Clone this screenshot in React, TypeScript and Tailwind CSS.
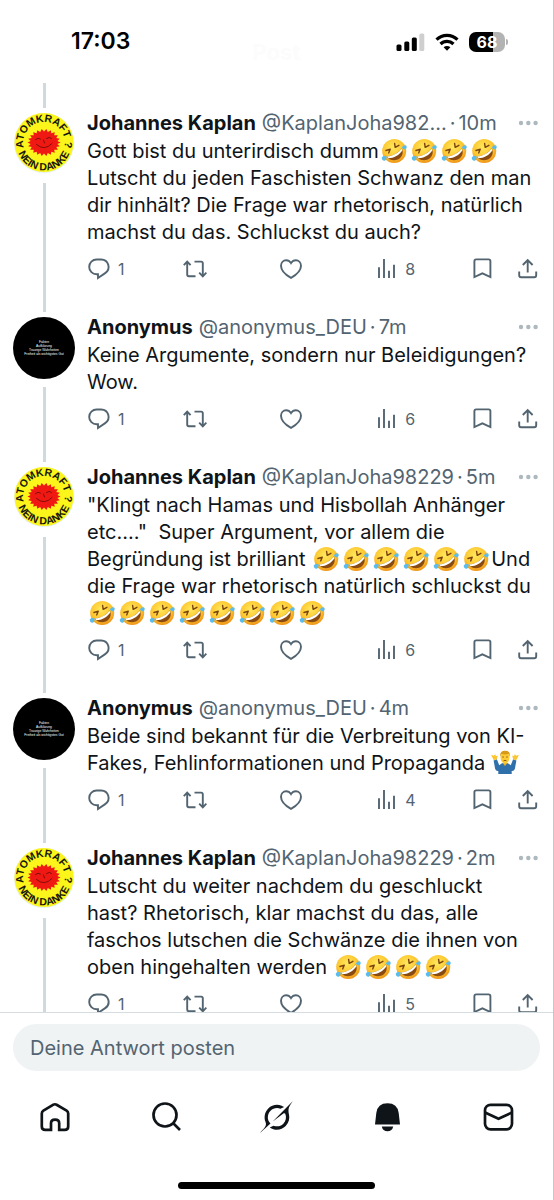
import { Fragment } from 'react';
import type { ReactNode } from 'react';

type Author = 'kaplan' | 'anonymus';

type Post = {
  author: Author;
  handle: string;
  time: string;
  text: string;
  views: number;
};

const names: Record<Author, string> = {
  kaplan: 'Johannes Kaplan',
  anonymus: 'Anonymus',
};

const posts: Post[] = [
  {
    author: 'kaplan',
    handle: '@KaplanJoha982...',
    time: '10m',
    text: 'Gott bist du unterirdisch dumm🤣🤣🤣🤣\nLutscht du jeden Faschisten Schwanz den man\ndir hinhält? Die Frage war rhetorisch, natürlich\nmachst du das. Schluckst du auch?',
    views: 8,
  },
  {
    author: 'anonymus',
    handle: '@anonymus_DEU',
    time: '7m',
    text: 'Keine Argumente, sondern nur Beleidigungen?\nWow.',
    views: 6,
  },
  {
    author: 'kaplan',
    handle: '@KaplanJoha98229',
    time: '5m',
    text: '"Klingt nach Hamas und Hisbollah Anhänger\netc...."  Super Argument, vor allem die\nBegründung ist brilliant 🤣🤣🤣🤣🤣🤣Und\ndie Frage war rhetorisch natürlich schluckst du\n🤣🤣🤣🤣🤣🤣🤣🤣',
    views: 6,
  },
  {
    author: 'anonymus',
    handle: '@anonymus_DEU',
    time: '4m',
    text: 'Beide sind bekannt für die Verbreitung von KI-\nFakes, Fehlinformationen und Propaganda 🤷',
    views: 4,
  },
  {
    author: 'kaplan',
    handle: '@KaplanJoha98229',
    time: '2m',
    text: 'Lutscht du weiter nachdem du geschluckt\nhast? Rhetorisch, klar machst du das, alle\nfaschos lutschen die Schwänze die ihnen von\noben hingehalten werden 🤣🤣🤣🤣',
    views: 5,
  },
];

function Laughing() {
  return (
    <svg viewBox="0 0 26 26" role="img" aria-label="🤣" className="mx-0.5 inline-block size-[26px] align-[-6px]">
      <defs>
        <radialGradient id="face" cx="0.45" cy="0.35" r="0.65">
          <stop offset="0" stopColor="#ffe85c" />
          <stop offset="0.65" stopColor="#fdc62f" />
          <stop offset="1" stopColor="#ee9418" />
        </radialGradient>
      </defs>
      <circle cx="13.2" cy="13" r="12" fill="url(#face)" />
      <path d="M5.800 18.200C11 18.600 17.600 15 20.600 10.200c2.600 4.200.5 9.500-3.800 11.300-4.400 1.800-9.400.2-11-3.300z" fill="#8a4b12" />
      <path d="M6 18.300C11.400 18.400 17.400 15.100 20.500 10.500l.8 2c-2.900 4.500-8.600 7.700-13.800 7.700z" fill="#fff" />
      <path d="M5 12.500l4.300-1.400-1.600 3.800M13.600 5.400l.6 4 3.700-2.100" fill="none" stroke="#7a4310" strokeWidth="1.400" strokeLinecap="round" strokeLinejoin="round" />
      <path d="M.9 19.200c1-1.200 2.900-1.500 4.600-.9.300 1.900-.3 3.900-1.700 4.400C2 23.100.2 21.100.9 19.200zM20.900 9.500c.9-1.600 2.800-2.600 4.200-1.900 1.100.9.700 2.900-.7 3.600-1.300.5-2.900-.3-3.500-1.700z" fill="#5bbcec" />
    </svg>
  );
}

function Shrugging() {
  return (
    <svg viewBox="0 0 28 26" role="img" aria-label="🤷" className="inline-block h-[26px] w-7 align-[-6px]">
      <path d="M2.600 10.400l3.300-1.200 2.300 6q2.600-2.400 5.800-2.400t5.800 2.400l2.300-6 3.300 1.200-1.500 8.300q-.8 2.600-3.200 2.300V24H7.300v-3q-2.400.3-3.200-2.300z" fill="#2f70ab" />
      <path d="M11.500 12.800h5L14 16z" fill="#f2b51e" />
      <path d="M5.800 9.200l-3 1.100L.6 6l-.2-1.300 2.200 1L4.400 4.200l.4 2 2-.8zM22.200 9.200l3 1.100L27.400 6l.2-1.300-2.200 1-1.800-1.500-.4 2-2-.8z" fill="#fcc42d" />
      <ellipse cx="14" cy="7.600" rx="4.500" ry="5.800" fill="#fdcb35" />
      <path d="M9.200 6.800Q8.400 1 14 .8t4.800 6L17.600 4q-3.600.9-7.200 0z" fill="#d99a16" />
      <path d="M11.300 7h1.500M15.200 7h1.500M12.500 10.800q1.500-1 3 0" stroke="#6b3f0d" strokeWidth=".8" fill="none" />
    </svg>
  );
}

function PostText({ text }: { text: string }) {
  return (
    <p className="text-[20px] leading-[27px] whitespace-pre-wrap text-[#0f1419]">
      {text.split(/(🤣|🤷)/u).map((part, i) => (
        <Fragment key={i}>{part === '🤣' ? <Laughing /> : part === '🤷' ? <Shrugging /> : part}</Fragment>
      ))}
    </p>
  );
}

// Zigzag outline of the laughing sun
const flames = Array.from({ length: 44 }, (_, i) => {
  const angle = (i * Math.PI) / 22;
  const radius = i % 2 === 0 ? 16.5 : 13.5;
  return `${31 + radius * Math.cos(angle)},${31 + radius * 0.82 * Math.sin(angle)}`;
}).join(' ');

function Avatar({ author }: { author: Author }) {
  if (author === 'anonymus') {
    return (
      <svg viewBox="0 0 62 62" className="size-[62px] shrink-0" fontFamily="Liberation Sans, sans-serif">
        <circle cx="31" cy="31" r="31" fill="#000" />
        <g fill="#fff" fontSize="3.300" textAnchor="middle">
          <text x="31" y="26">Fakten</text>
          <text x="31" y="30">Aufklärung</text>
          <text x="31" y="34">Traurige Wahrheiten</text>
          <text x="31" y="38">Freiheit als wichtigstes Gut</text>
        </g>
      </svg>
    );
  }
  return (
    <svg viewBox="0 1.500 62 62" className="size-[62px] shrink-0" fontFamily="Liberation Sans, sans-serif">
      <defs>
        <path id="arc-top" d="M11.500 38.500A20.800 20.800 0 1 1 50.500 38.500" />
        <path id="arc-bottom" d="M3.500 29a27.600 27.600 0 1 0 55 0" />
      </defs>
      <circle cx="31" cy="31.500" r="30" fill="#e6f0f2" />
      <circle cx="31" cy="31" r="29.500" fill="#fbf51b" />
      <polygon points={flames} fill="#f01812" />
      <path d="M22.500 28q2.500-2.500 5-.5M33.500 27q3-2.500 5 0M23.500 33q8 7 15.500-1M30.500 28.500l1 3" fill="none" stroke="#6d0f08" strokeWidth=".9" strokeLinecap="round" />
      <g fill="#16160a" fontSize="10.500" fontWeight="700" textAnchor="middle">
        <text><textPath href="#arc-top" startOffset="50%">ATOMKRAFT ?</textPath></text>
        <text><textPath href="#arc-bottom" startOffset="50%">NEIN DANKE</textPath></text>
      </g>
    </svg>
  );
}

function ActionIcon({ children }: { children: ReactNode }) {
  return (
    <svg viewBox="0 0 24 24" className="size-6 shrink-0" fill="none" stroke="currentColor" strokeWidth="1.900">
      {children}
    </svg>
  );
}

function Actions({ views }: { views: number }) {
  return (
    <div className="flex h-6 items-center text-[16px] text-[#536471]">
      <button aria-label="Antworten" className="flex flex-1 items-center gap-[7px]">
        <ActionIcon>
          <path d="M9.600 2.500h4.600a7.400 7.400 0 0 1 4 13.600L11 21v-3.700H9.600a7.400 7.400 0 0 1 0-14.800z" />
        </ActionIcon>
        1
      </button>
      <button aria-label="Reposten" className="flex flex-1 items-center">
        <ActionIcon>
          <path d="M4.200 4.800v12.700q0 1.700 1.700 1.700h6.600M.8 8.200l3.400-3.600 3.400 3.600M11.500 4.600h6.600q1.700 0 1.700 1.700V19M16.200 15.600l3.600 3.700 3.600-3.700" />
        </ActionIcon>
      </button>
      <button aria-label="Gefällt mir" className="flex flex-1 items-center">
        <ActionIcon>
          <path d="M12 20.900C6.500 17.800 2 13.500 2 8.800 2 5.600 4.300 3.200 7.100 3.200c2 0 3.700 1 4.900 2.900 1.200-1.900 2.900-2.900 4.900-2.900 2.800 0 5.100 2.400 5.100 5.600 0 4.700-4.500 9-10 12.100z" />
        </ActionIcon>
      </button>
      <button aria-label="Aufrufe" className="flex flex-1 items-center gap-[7px]">
        <ActionIcon>
          <path d="M5 10.300V21M10 2v19M15 13.700V21M20 7.700V21" />
        </ActionIcon>
        {views}
      </button>
      <div className="flex gap-[22px]">
        <button aria-label="Lesezeichen">
          <ActionIcon>
            <path d="M4.400 20V4.200q0-1.800 1.800-1.800h12.400q1.800 0 1.800 1.800V20l-8-3.600z" />
          </ActionIcon>
        </button>
        <button aria-label="Teilen">
          <ActionIcon>
            <path d="M3.200 14.500v3.800q0 1.900 1.900 1.900h13.200q1.900 0 1.900-1.900v-3.800M11.700 15.500V3.200M6.800 8l4.900-4.900L16.600 8" />
          </ActionIcon>
        </button>
      </div>
    </div>
  );
}

function PostItem({ post }: { post: Post }) {
  return (
    <article className="flex gap-3 px-[13px]">
      <div className="flex flex-col items-center pt-[5px]">
        <Avatar author={post.author} />
        <div className="mt-2 w-[3px] flex-1 bg-[#cfd9de]" />
      </div>
      <div className="min-w-0 flex-1 pt-px pb-[31px]">
        <div className="mb-px flex h-7 items-center text-[20px] whitespace-nowrap text-[#536471]">
          <span className="font-bold text-[#0f1419]">{names[post.author]}</span>
          <span className="ml-1.5">{post.handle}</span>
          <span className="mx-[3px]">·</span>
          <span>{post.time}</span>
          <button aria-label="Mehr" className="ml-auto">
            <svg viewBox="0 0 24 24" className="size-6" fill="#adb8bf">
              <circle cx="5" cy="12" r="2.200" />
              <circle cx="12.300" cy="12" r="2.200" />
              <circle cx="19.600" cy="12" r="2.200" />
            </svg>
          </button>
        </div>
        <PostText text={post.text} />
        <div className="pt-[11px]">
          <Actions views={post.views} />
        </div>
      </div>
    </article>
  );
}

function StatusBar() {
  return (
    <header className="relative h-[83px] shrink-0">
      <div className="absolute inset-x-0 top-9 flex items-center justify-center text-[22px] font-bold text-[#fcfcfc]">
        Post
      </div>
      <div className="relative flex h-[83px] items-center justify-between pr-[45px] pl-[71px]">
        <span className="text-[23px] font-semibold text-black">17:03</span>
        <div className="flex items-center gap-2.5">
          <svg viewBox="0 0 29 20" className="h-5 w-[29px]">
            <rect x="0.500" y="12.500" width="5" height="6.500" rx="1.500" />
            <rect x="8.300" y="9.500" width="5" height="9.500" rx="1.500" />
            <rect x="15.800" y="5.500" width="5" height="13.500" rx="1.500" />
            <rect x="23.300" y="1.500" width="5" height="17.500" rx="1.500" fill="#cfcfcf" />
          </svg>
          <svg viewBox="0 0 24 20" className="h-5 w-6" fill="none" stroke="#000" strokeWidth="3.200">
            <path d="M1.500 7.700a15 15 0 0 1 21 0M5.500 12a9.300 9.300 0 0 1 13 0" />
            <path d="M12 18.800l-3.400-3.500a4.900 4.900 0 0 1 6.800 0z" fill="#000" stroke="none" />
          </svg>
          <div className="flex items-center">
            <div className="flex h-5 w-[36px] items-center justify-center rounded-[7px] bg-linear-to-r from-black from-68% to-[#b3b3b3] to-68% text-[16px] font-bold text-white">
              68
            </div>
            <div className="ml-px h-1.5 w-0.5 rounded-r-full bg-[#b3b3b3]" />
          </div>
        </div>
      </div>
    </header>
  );
}

function NavIcon({ label, children }: { label: string; children: ReactNode }) {
  return (
    <a href="#" aria-label={label} className="flex flex-1 justify-center">
      <svg viewBox="0 0 36 36" className="size-9" fill="none" stroke="#0f1419" strokeWidth="2.700">
        {children}
      </svg>
    </a>
  );
}

export default function App() {
  return (
    <div className="flex h-screen flex-col overflow-hidden border-r border-[#c4c7c9] bg-white font-[Inter,sans-serif]">
      <StatusBar />
      <main className="min-h-0 flex-1 overflow-hidden">
        <div className="flex h-[25px] w-[88px] justify-center">
          <div className="w-[3px] bg-[#cfd9de]" />
        </div>
        {posts.map((post) => (
          <PostItem key={post.time} post={post} />
        ))}
      </main>
      <footer className="border-t border-[#d5dde1] pt-[11px]">
        <div className="px-[13px]">
          <input
            aria-label="Deine Antwort posten"
            placeholder="Deine Antwort posten"
            className="block h-[47px] w-full rounded-full bg-[#eff3f4] px-[17px] text-[20px] placeholder:text-[#536471]"
          />
        </div>
        <nav className="mt-7 flex">
          <NavIcon label="Startseite">
            <path d="M14 30.800H8.200q-3.400 0-3.400-3.400V14.500q0-1.900 1.600-2.900l10-5.900q1.600-.9 3.200 0l10 5.900q1.600 1 1.600 2.900v12.900q0 3.400-3.400 3.400h-5.600v-6.500q0-3.600-4.100-3.600t-4.100 3.600z" />
          </NavIcon>
          <NavIcon label="Suche">
            <circle cx="17" cy="16" r="11.500" />
            <path d="M25 24l7 7" />
          </NavIcon>
          <NavIcon label="Grok">
            <path
              transform="translate(2 2)"
              d="M12.745 20.540l10.970-8.190c.539-.4 1.307-.244 1.564.38 1.349 3.288.746 7.241-1.938 9.955-2.683 2.714-6.417 3.310-9.830 1.954l-3.728 1.745c5.347 3.697 11.840 2.782 15.898-1.324 3.219-3.255 4.216-7.692 3.284-11.693l.008.009c-1.351-5.878.332-8.227 3.782-13.031L33 0l-4.540 4.590v-.014L12.743 20.544m-2.263 1.987c-3.837-3.707-3.175-9.446.1-12.755 2.420-2.449 6.388-3.448 9.852-1.979l3.720-1.737c-.67-.49-1.530-1.017-2.515-1.387-4.455-1.854-9.789-.931-13.410 2.728-3.483 3.523-4.579 8.940-2.697 13.561 1.405 3.454-.899 5.898-3.220 8.364C1.490 30.200.666 31.074 0 32l10.478-9.466"
              fill="#0f1419"
              stroke="none"
            />
          </NavIcon>
          <NavIcon label="Mitteilungen">
            <path d="M6 25.500L7.300 14Q8.500 4.200 18.500 4.200T29.700 14l1.300 11.500zM12.800 27.500h11.400q-1 4.800-5.700 4.800t-5.700-4.800z" fill="#0f1419" stroke="none" />
          </NavIcon>
          <NavIcon label="Nachrichten">
            <rect x="5" y="5.800" width="27" height="24.500" rx="5.500" />
            <path d="M5 13.500L18.500 19.800l13.500-6.300" />
          </NavIcon>
        </nav>
        <div className="mx-auto mt-[47px] mb-[11px] h-[7px] w-[197px] rounded-full bg-black" />
      </footer>
    </div>
  );
}
